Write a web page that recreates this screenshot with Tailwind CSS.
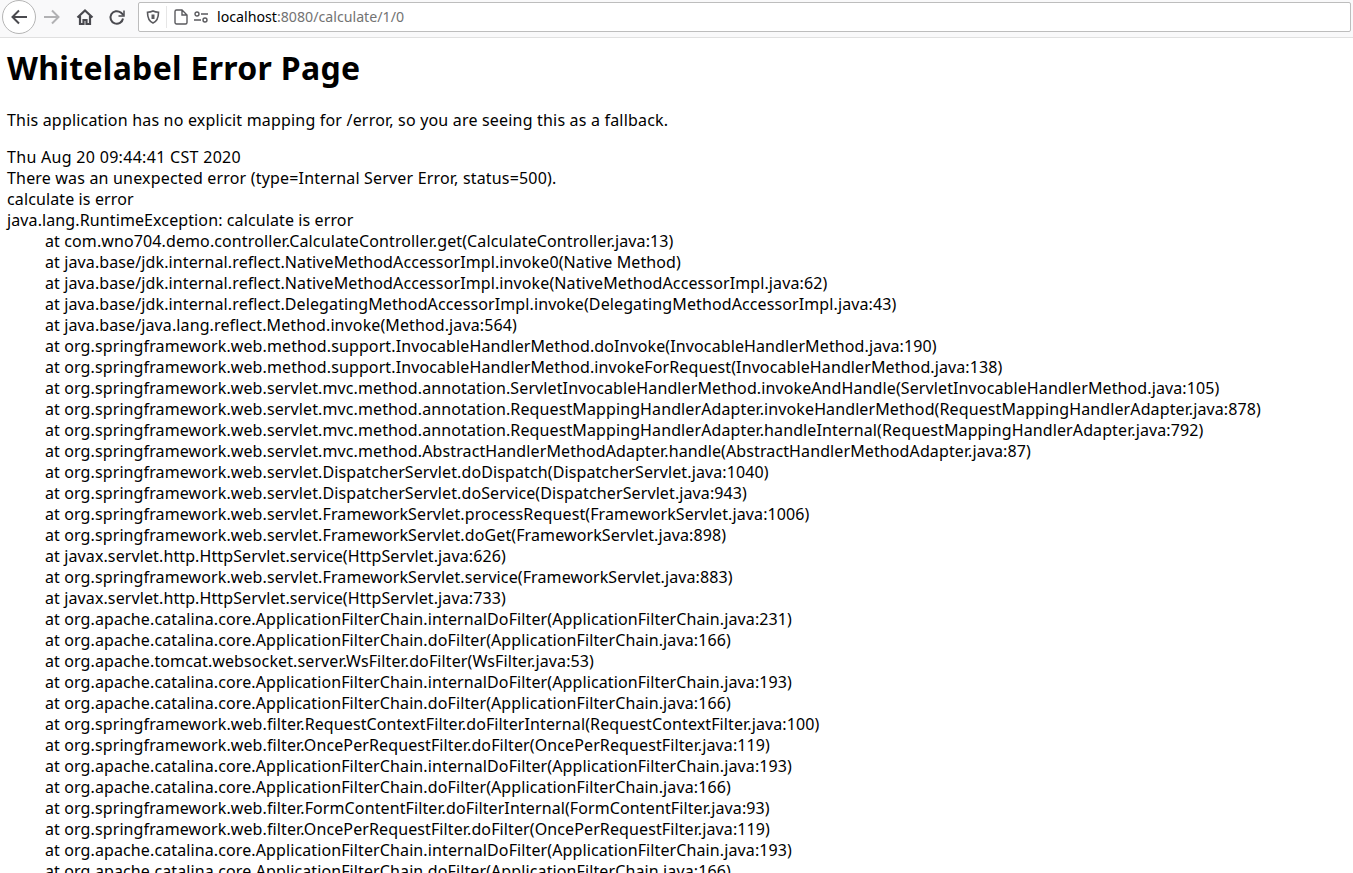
<!DOCTYPE html>
<html lang="en">

<head>
    <meta charset="UTF-8">
    <title>Whitelabel Error Page</title>
    <script src="https://cdn.jsdelivr.net/npm/@tailwindcss/browser@4"></script>
</head>

<body class="bg-white h-[873px] overflow-hidden font-['Noto_Sans',sans-serif] text-black">
    <!-- browser toolbar -->
    <nav class="h-[38px] bg-[#f9f9fa] border-b border-[#e0e0e0] flex items-start pl-[2px]">
        <div class="w-[34px] h-[34px] rounded-full border border-[#b5b5b5] bg-white flex items-center justify-center">
            <svg class="w-[18px] h-[18px]" viewBox="0 0 18 18" fill="none" stroke="#4a4a4f" stroke-width="2"><path d="M17 9H2.500M9 2.500 2.500 9 9 15.500"/></svg>
        </div>
        <div class="w-[32px] h-[34px] flex items-center justify-center">
            <svg class="w-[18px] h-[18px]" viewBox="0 0 18 18" fill="none" stroke="#b1b1b3" stroke-width="2"><path d="M1 9h14.500M9 2.500 15.500 9 9 15.500"/></svg>
        </div>
        <div class="w-[33px] h-[34px] flex items-center justify-center">
            <svg class="w-[18px] h-[18px]" viewBox="0 0 18 18" fill="none" stroke="#4a4a4f" stroke-width="2.200"><path d="M1.500 9.500 9 2.500l7.500 7M4 8v8h3.500v-4h3v4H14V8"/></svg>
        </div>
        <div class="w-[31px] h-[34px] flex items-center justify-center">
            <svg class="w-[18px] h-[18px]" viewBox="0 0 18 18" fill="none" stroke="#4a4a4f" stroke-width="2"><path d="M15 10.500A6.300 6.300 0 1 1 12.800 4.600L15.500 7"/><path d="M16 2.500v5.500h-5.500" stroke-width="1.500"/></svg>
        </div>
        <div class="ml-[6px] mt-[2px] h-[30px] flex-1 bg-white border border-[#bdbdbd] rounded-[2px] flex items-center">
            <div class="w-[27px] h-full flex items-center justify-center">
                <svg class="w-[14px] h-[14px]" viewBox="0 0 14 14" fill="none" stroke="#5a5a5e" stroke-width="1.600"><path d="M7 1c2 1 4 1.200 5.500 1.200C12.500 8 10.500 11.500 7 13 3.500 11.500 1.500 8 1.500 2.200 3 2.200 5 2 7 1Z"/><path d="M7 4.500v4.500" stroke-width="3"/></svg>
            </div>
            <div class="w-px h-[22px] bg-[#e6e6e6]"></div>
            <svg class="ml-[7px] w-[14px] h-[16px]" viewBox="0 0 14 16" fill="none" stroke="#5a5a5e" stroke-width="1.400"><path d="M1 2.500A1.500 1.500 0 0 1 2.500 1H8l5 5v7.500a1.500 1.500 0 0 1-1.500 1.500h-9A1.500 1.500 0 0 1 1 13.500ZM8 1v5h5"/></svg>
            <svg class="ml-[6px] w-[14px] h-[12px]" viewBox="0 0 14 12" fill="none" stroke="#5a5a5e" stroke-width="1.400"><circle cx="3" cy="3" r="2"/><path d="M7 3h7M0 9h7"/><circle cx="11" cy="9" r="2"/></svg>
            <span class="ml-[9px] text-[14.200px] leading-none text-[#737373] whitespace-pre"><span class="text-black">localhost</span>:8080/calculate/1/0</span>
        </div>
        <div class="w-[2px]"></div>
    </nav>

    <main class="px-[7px]">
        <h1 class="text-[32px] leading-[42px] font-bold mt-[9px] tracking-[0.3px]">Whitelabel Error Page</h1>
        <p class="text-[16px] leading-[21px] mt-[21px] tracking-[0.19px]">This application has no explicit mapping for /error, so you are seeing this as a fallback.</p>
        <div class="text-[16px] leading-[21px] mt-[16px] tracking-[0.3px]">Thu Aug 20 09:44:41 CST 2020</div>
        <div class="text-[16px] leading-[21px] tracking-[0.18px]">There was an unexpected error (type=Internal Server Error, status=500).</div>
        <div class="text-[16px] leading-[21px] tracking-[0.12px]">calculate is error</div>
        <div class="text-[16px] leading-[21px] tracking-[0.11px] whitespace-pre [tab-size:38px]">java.lang.RuntimeException: calculate is error
	at com.wno704.demo.controller.CalculateController.get(CalculateController.java:13)
	at java.base/jdk.internal.reflect.NativeMethodAccessorImpl.invoke0(Native Method)
	at java.base/jdk.internal.reflect.NativeMethodAccessorImpl.invoke(NativeMethodAccessorImpl.java:62)
	at java.base/jdk.internal.reflect.DelegatingMethodAccessorImpl.invoke(DelegatingMethodAccessorImpl.java:43)
	at java.base/java.lang.reflect.Method.invoke(Method.java:564)
	at org.springframework.web.method.support.InvocableHandlerMethod.doInvoke(InvocableHandlerMethod.java:190)
	at org.springframework.web.method.support.InvocableHandlerMethod.invokeForRequest(InvocableHandlerMethod.java:138)
	at org.springframework.web.servlet.mvc.method.annotation.ServletInvocableHandlerMethod.invokeAndHandle(ServletInvocableHandlerMethod.java:105)
	at org.springframework.web.servlet.mvc.method.annotation.RequestMappingHandlerAdapter.invokeHandlerMethod(RequestMappingHandlerAdapter.java:878)
	at org.springframework.web.servlet.mvc.method.annotation.RequestMappingHandlerAdapter.handleInternal(RequestMappingHandlerAdapter.java:792)
	at org.springframework.web.servlet.mvc.method.AbstractHandlerMethodAdapter.handle(AbstractHandlerMethodAdapter.java:87)
	at org.springframework.web.servlet.DispatcherServlet.doDispatch(DispatcherServlet.java:1040)
	at org.springframework.web.servlet.DispatcherServlet.doService(DispatcherServlet.java:943)
	at org.springframework.web.servlet.FrameworkServlet.processRequest(FrameworkServlet.java:1006)
	at org.springframework.web.servlet.FrameworkServlet.doGet(FrameworkServlet.java:898)
	at javax.servlet.http.HttpServlet.service(HttpServlet.java:626)
	at org.springframework.web.servlet.FrameworkServlet.service(FrameworkServlet.java:883)
	at javax.servlet.http.HttpServlet.service(HttpServlet.java:733)
	at org.apache.catalina.core.ApplicationFilterChain.internalDoFilter(ApplicationFilterChain.java:231)
	at org.apache.catalina.core.ApplicationFilterChain.doFilter(ApplicationFilterChain.java:166)
	at org.apache.tomcat.websocket.server.WsFilter.doFilter(WsFilter.java:53)
	at org.apache.catalina.core.ApplicationFilterChain.internalDoFilter(ApplicationFilterChain.java:193)
	at org.apache.catalina.core.ApplicationFilterChain.doFilter(ApplicationFilterChain.java:166)
	at org.springframework.web.filter.RequestContextFilter.doFilterInternal(RequestContextFilter.java:100)
	at org.springframework.web.filter.OncePerRequestFilter.doFilter(OncePerRequestFilter.java:119)
	at org.apache.catalina.core.ApplicationFilterChain.internalDoFilter(ApplicationFilterChain.java:193)
	at org.apache.catalina.core.ApplicationFilterChain.doFilter(ApplicationFilterChain.java:166)
	at org.springframework.web.filter.FormContentFilter.doFilterInternal(FormContentFilter.java:93)
	at org.springframework.web.filter.OncePerRequestFilter.doFilter(OncePerRequestFilter.java:119)
	at org.apache.catalina.core.ApplicationFilterChain.internalDoFilter(ApplicationFilterChain.java:193)
	at org.apache.catalina.core.ApplicationFilterChain.doFilter(ApplicationFilterChain.java:166)</div>
    </main>
</body>

</html>
